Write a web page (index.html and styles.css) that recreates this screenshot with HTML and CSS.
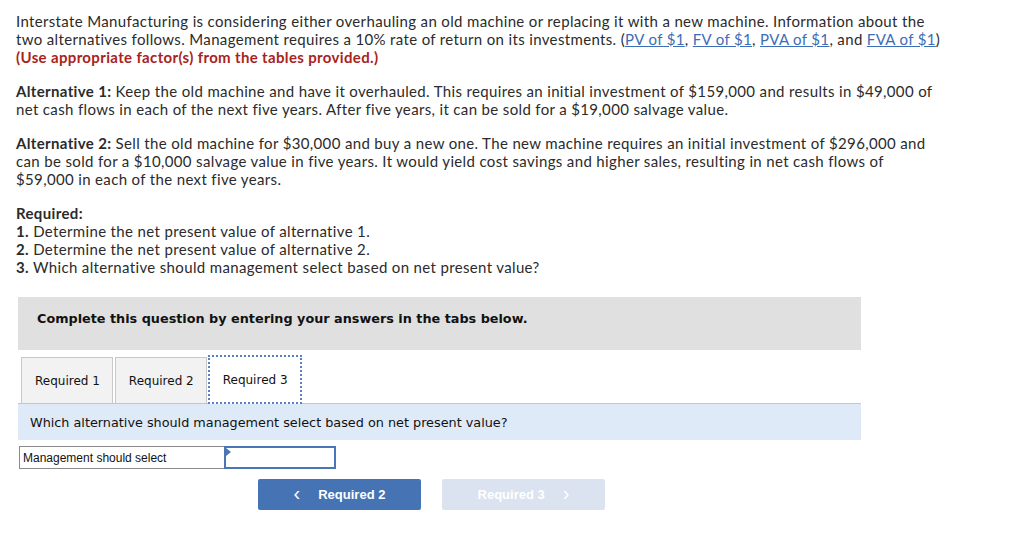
FILE: index.html
```html
<!DOCTYPE html>
<html>
<head>
<meta charset="utf-8">
<link rel="stylesheet" href="styles.css">
</head>
<body>
<div class="page">
  <div class="text">
    <p class="para">Interstate Manufacturing is considering either overhauling an old machine or replacing it with a new machine. Information about the two alternatives follows. Management requires a 10% rate of return on its investments. (<a class="lnk" href="#">PV of $1</a>, <a class="lnk" href="#">FV of $1</a>, <a class="lnk" href="#">PVA of $1</a>, and <a class="lnk" href="#">FVA of $1</a>)<br><b class="red">(Use appropriate factor(s) from the tables provided.)</b></p>
    <p class="para"><b>Alternative 1:</b> Keep the old machine and have it overhauled. This requires an initial investment of $159,000 and results in $49,000 of net cash flows in each of the next five years. After five years, it can be sold for a $19,000 salvage value.</p>
    <p class="para"><b>Alternative 2:</b> Sell the old machine for $30,000 and buy a new one. The new machine requires an initial investment of $296,000 and can be sold for a $10,000 salvage value in five years. It would yield cost savings and higher sales, resulting in net cash flows of $59,000 in each of the next five years.</p>
    <p class="para req"><b>Required:</b><br><b>1.</b> Determine the net present value of alternative 1.<br><b>2.</b> Determine the net present value of alternative 2.<br><b>3.</b> Which alternative should management select based on net present value?</p>
  </div>

  <div class="widget">
    <div class="banner">Complete this question by entering your answers in the tabs below.</div>
    <div class="tabs">
      <div class="tab">Required 1</div>
      <div class="tab">Required 2</div>
      <div class="tab active">Required 3</div>
    </div>
    <div class="prompt">Which alternative should management select based on net present value?</div>
    <div class="answer">
      <div class="label">Management should select</div>
      <div class="input"><span class="marker"></span></div>
    </div>
    <div class="nav">
      <div class="btn prev"><span class="chev">&lsaquo;</span>Required 2</div>
      <div class="btn next">Required 3<span class="chev">&rsaquo;</span></div>
    </div>
  </div>
</div>
</body>
</html>
```
FILE: styles.css
```css
html, body { margin: 0; padding: 0; background: #fff; }
.page {
  padding: 12px 16px;
  font-family: "Lato", "Liberation Sans", sans-serif;
  color: #2b2b2b;
}
.text {
  width: 925px;
  font-size: 15px;
  line-height: 18px;
  letter-spacing: 0.35px;
}
.para { margin: 0 0 16px 0; }
.para b { font-weight: 700; }
.red { color: #a9231c; }
.lnk { color: #3d6db5; text-decoration: underline; }
.req { margin-bottom: 21px; }

.widget { margin-left: 2px; width: 843px; }
.banner {
  background: #e0e0e0;
  font-family: Verdana, "DejaVu Sans", sans-serif;
  font-weight: bold;
  font-size: 12.8px;
  line-height: 16px;
  color: #111;
  padding: 14px 19px 23px 19px;
}
.tabs {
  display: flex;
  gap: 2px;
  padding: 0 0 0 3px;
  height: 53px;
  box-sizing: border-box;
  align-items: flex-end;
}
.tab {
  height: 46px;
  box-sizing: border-box;
  border: 1px solid #c8c8c8;
  border-bottom: none;
  background: #f2f2f2;
  font-family: Verdana, "DejaVu Sans", sans-serif;
  font-size: 12px;
  color: #111;
  padding: 1px 12px 0 13px;
  display: flex;
  align-items: center;
}
.tab.active {
  height: 49px;
  background: #fff;
  border: 2px dotted #5b80c0;
  padding: 1px 12px 0 13px;
  margin-bottom: -1px;
  margin-left: -1px;
  position: relative;
  z-index: 1;
}
.prompt {
  border-top: 1px solid #c6c6c6;
  background: #deeaf8;
  font-family: Verdana, "DejaVu Sans", sans-serif;
  font-size: 12.8px;
  color: #111;
  height: 37px;
  box-sizing: border-box;
  padding: 0 12px;
  display: flex;
  align-items: center;
}
.answer {
  display: flex;
  margin: 6px 0 0 1px;
  height: 23px;
}
.label {
  width: 205px;
  box-sizing: border-box;
  border: 1px solid #8a8a8a;
  border-right: none;
  font-family: Arial, "Liberation Sans", sans-serif;
  font-size: 12px;
  color: #111;
  padding: 0 3px;
  display: flex;
  align-items: center;
}
.input {
  width: 112px;
  box-sizing: border-box;
  border: 2px solid #4a76b6;
  position: relative;
  background: #fff;
}
.marker {
  position: absolute;
  left: 0; top: 0;
  width: 0; height: 0;
  border-top: 4px solid transparent;
  border-bottom: 4px solid transparent;
  border-left: 5px solid #4a76b6;
}
.nav {
  display: flex;
  gap: 21px;
  margin: 10px 0 0 240px;
}
.btn {
  width: 163px;
  height: 31px;
  border-radius: 2px;
  font-family: Arial, "Liberation Sans", sans-serif;
  font-weight: bold;
  font-size: 13px;
  color: #fff;
  display: flex;
  align-items: center;
  justify-content: center;
}
.btn.prev { background: #4573b4; }
.btn.next { background: #dae3ef; }
.chev { font-size: 20px; font-weight: normal; line-height: 1; margin: -3px 0 0 0; }
.prev .chev { margin-right: 18px; }
.next .chev { margin-left: 18px; }
```
